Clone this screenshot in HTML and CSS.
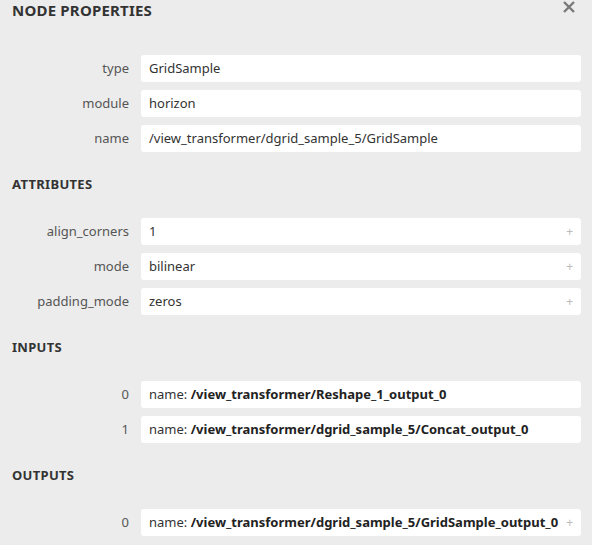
FILE: index.html
```html
<!DOCTYPE html>
<html>
<head>
<meta charset="utf-8">
<link rel="stylesheet" href="styles.css">
</head>
<body>
<div class="panel">
  <div class="title-bar">
    <div class="title">NODE PROPERTIES</div>
    <svg class="close" width="14" height="14" viewBox="0 0 14 14"><path d="M2 2 L12 12 M12 2 L2 12" stroke="#7a7a7a" stroke-width="2.4" stroke-linecap="butt"/></svg>
  </div>

  <div class="rows">
    <div class="row"><div class="label">type</div><div class="value">GridSample</div></div>
    <div class="row"><div class="label">module</div><div class="value">horizon</div></div>
    <div class="row"><div class="label">name</div><div class="value">/view_transformer/dgrid_sample_5/GridSample</div></div>
  </div>

  <div class="section">ATTRIBUTES</div>
  <div class="rows">
    <div class="row"><div class="label">align_corners</div><div class="value"><span class="text">1</span><span class="plus">+</span></div></div>
    <div class="row"><div class="label">mode</div><div class="value"><span class="text">bilinear</span><span class="plus">+</span></div></div>
    <div class="row"><div class="label">padding_mode</div><div class="value"><span class="text">zeros</span><span class="plus">+</span></div></div>
  </div>

  <div class="section">INPUTS</div>
  <div class="rows">
    <div class="row"><div class="label">0</div><div class="value"><span class="text">name: <b>/view_transformer/Reshape_1_output_0</b></span></div></div>
    <div class="row"><div class="label">1</div><div class="value"><span class="text">name: <b>/view_transformer/dgrid_sample_5/Concat_output_0</b></span></div></div>
  </div>

  <div class="section">OUTPUTS</div>
  <div class="rows">
    <div class="row"><div class="label">0</div><div class="value"><span class="text">name: <b>/view_transformer/dgrid_sample_5/GridSample_output_0</b></span><span class="plus">+</span></div></div>
  </div>
</div>
</body>
</html>
```

FILE: styles.css
```css
html, body {
  margin: 0;
  padding: 0;
  background: #ececec;
}
body {
  font-family: "Noto Sans", "Open Sans", sans-serif;
  font-size: 13px;
  color: #333;
}
.panel {
  padding: 0 11px 0 12px;
}
.title-bar {
  display: flex;
  justify-content: space-between;
  align-items: flex-start;
  height: 20px;
  margin-bottom: 35px;
}
.title {
  font-weight: bold;
  font-size: 15px;
  line-height: 20px;
  color: #333;
  letter-spacing: 0.2px;
}
.close {
  margin-top: 0px;
  margin-right: 5px;
}
.rows {
  display: flex;
  flex-direction: column;
  gap: 8px;
}
.row {
  display: grid;
  grid-template-columns: 117px 1fr;
  column-gap: 12px;
  height: 27px;
}
.label {
  text-align: right;
  line-height: 27px;
  color: #555;
}
.value {
  background: #fff;
  border-radius: 3px;
  line-height: 27px;
  padding: 0 8px;
  display: flex;
  justify-content: space-between;
  white-space: nowrap;
  overflow: hidden;
  color: #333;
}
.value b {
  font-weight: bold;
  color: #222;
}
.plus {
  color: #bbb;
  font-size: 12px;
  margin-left: 2px;
}
.section {
  font-weight: bold;
  font-size: 13px;
  line-height: 20px;
  color: #333;
  letter-spacing: 0.3px;
  margin-top: 22px;
  margin-bottom: 24px;
}
```
